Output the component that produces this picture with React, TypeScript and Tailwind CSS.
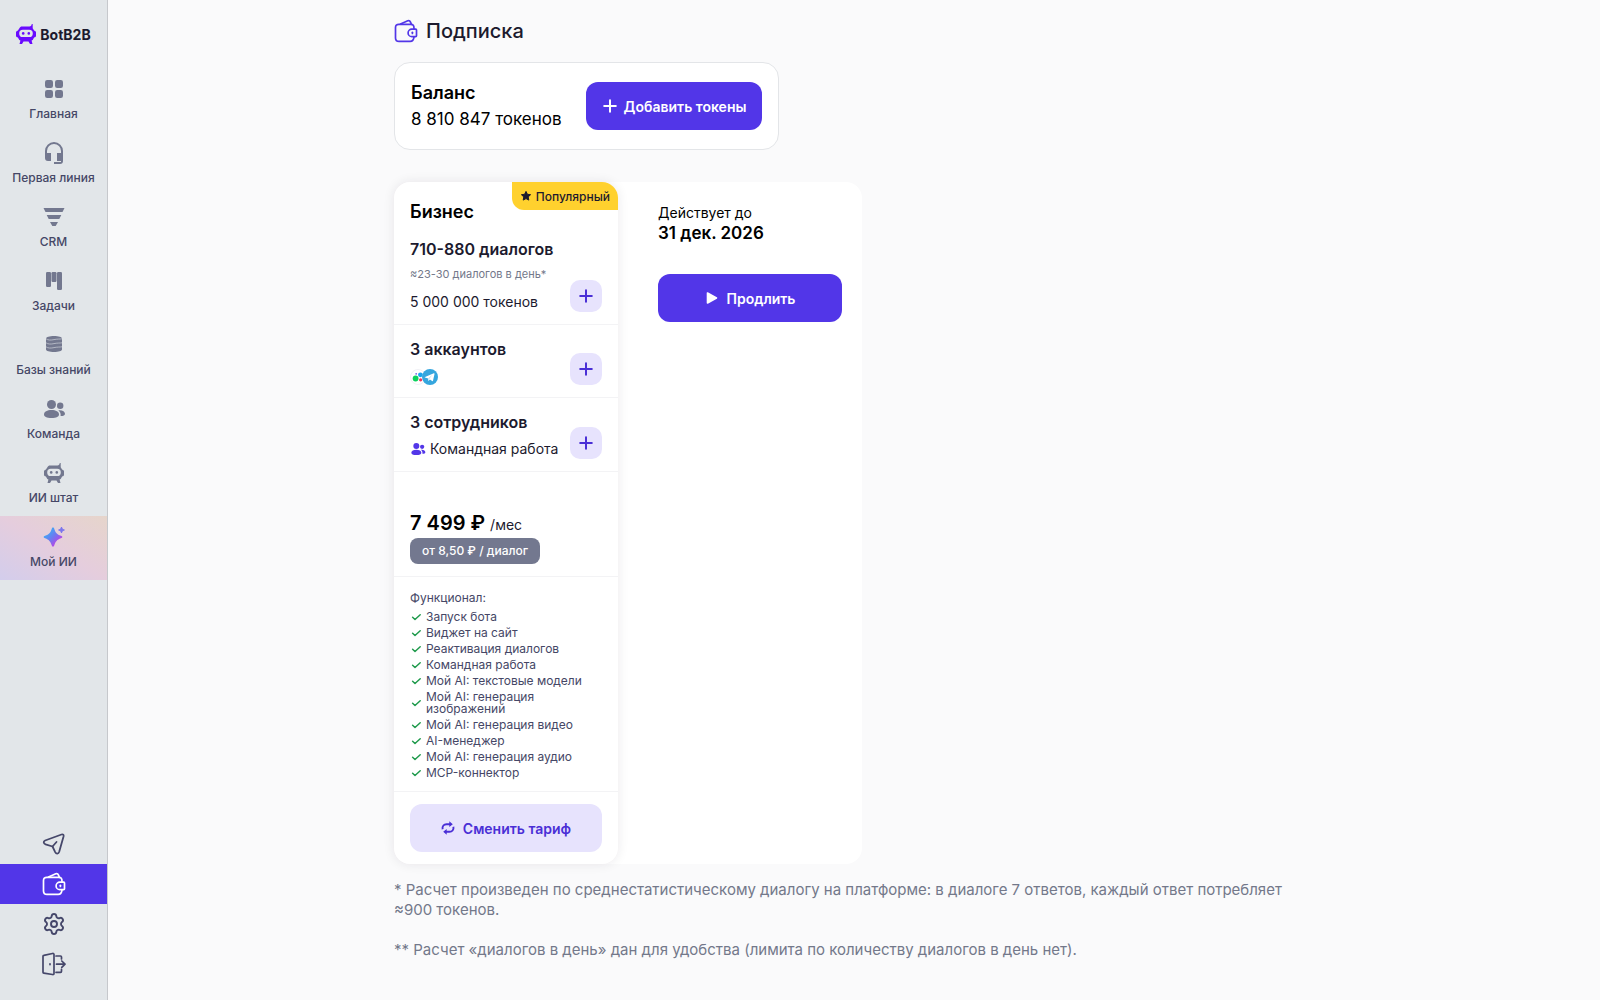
import type { ReactNode } from 'react';
import { Plus, Settings } from 'lucide-react';

interface IconProps {
  className?: string;
}

function RobotIcon({ className }: IconProps) {
  return (
    <svg viewBox="0 0 20 20" className={className} fill="currentColor">
      <path
        fillRule="evenodd"
        d="M13.5 2.6c1.400-.2 2-1 2.300-2.600h.9v4.200l1.400 2.300 1.400.7.5 1v3.800l-.5 1-1.400.6-1.400 2.300-1.100.6.9 3.400H14l-1.500-2.300h-5L6 19.900H3.500l.9-3.400-1.100-.6-1.400-2.300-1.400-.6-.5-1V8.200l.5-1 1.400-.7 2-3.100 1.200-.8ZM6.800 5.800a3.600 3.600 0 0 0 0 7.200h6.400a3.600 3.600 0 0 0 0-7.200Z"
      />
      <circle cx="7.2" cy="9.4" r="1.3" />
      <circle cx="12.8" cy="9.4" r="1.3" />
    </svg>
  );
}

function GridIcon() {
  return (
    <svg viewBox="0 0 24 24" className="size-6" fill="currentColor">
      <rect x="3" y="3" width="8" height="8" rx="2.2" />
      <rect x="13" y="3" width="8" height="8" rx="2.2" />
      <rect x="3" y="13" width="8" height="8" rx="2.2" />
      <rect x="13" y="13" width="8" height="8" rx="2.2" />
    </svg>
  );
}

function HeadsetIcon() {
  return (
    <svg viewBox="0 0 24 24" className="size-6" fill="currentColor">
      <path d="M12 1a9 9 0 0 0-9 9v7a3 3 0 0 0 3 3h3v-8H5v-2a7 7 0 0 1 14 0v2h-4v8h4v1h-7v2h6a3 3 0 0 0 3-3V10a9 9 0 0 0-9-9Z" />
    </svg>
  );
}

function FunnelIcon() {
  return (
    <svg viewBox="0 0 24 24" className="size-6" fill="currentColor">
      <path d="M1.500 3h21l-2 4h-17ZM4.700 10h14.600l-2 4H6.700ZM8 17h8l-2.300 4h-3.400Z" />
    </svg>
  );
}

function BoardIcon() {
  return (
    <svg viewBox="0 0 24 24" className="size-6" fill="currentColor">
      <rect x="4" y="3" width="5" height="15" rx="1.2" />
      <rect x="9.5" y="3" width="5" height="10" rx="1.2" />
      <rect x="15" y="3" width="5" height="18" rx="1.2" />
    </svg>
  );
}

function DatabaseIcon() {
  return (
    <svg viewBox="0 0 24 24" className="size-6">
      <path
        d="M4 5.500C4 4 7.500 3 12 3s8 1 8 2.500v11c0 1.500-3.500 2.500-8 2.500s-8-1-8-2.500Z"
        fill="currentColor"
      />
      <g fill="none" stroke="#c3c7d0" strokeWidth="0.8">
        <path d="M4 5.800c2 1.500 5 1.500 8 .8s6-.4 8-.8" />
        <path d="M4 9.800c2 1.500 5 1.500 8 .8s6-.4 8-.8" />
        <path d="M4 13.800c2 1.500 5 1.500 8 .8s6-.4 8-.8" />
      </g>
    </svg>
  );
}

function TeamIcon({ className }: IconProps) {
  return (
    <svg viewBox="0 0 24 24" className={className} fill="currentColor">
      <circle cx="9.5" cy="7.500" r="4.500" />
      <path d="M2 17.500c0-3 3.200-4.500 7.500-4.500s7.500 1.500 7.500 4.500c0 2.300-2.500 3.500-7.500 3.500S2 19.800 2 17.500Z" />
      <circle cx="18.200" cy="8.800" r="3.200" />
      <path d="M16.300 13.300c3.800-.6 6.700 1.200 6.700 3.400 0 1.500-1.500 2.300-4.400 2.400.4-2.200-.5-4.400-2.300-5.800Z" />
    </svg>
  );
}

function SparkleIcon() {
  return (
    <svg viewBox="0 0 24 24" className="size-6">
      <defs>
        <linearGradient id="sparkle" x1="0" y1="0" x2="1" y2="1">
          <stop offset="0.2" stopColor="#3fa9f5" />
          <stop offset="0.5" stopColor="#6f78f0" />
          <stop offset="0.75" stopColor="#b04ae8" />
        </linearGradient>
      </defs>
      <path
        d="M11 2.500c.7 0 1 .5 1.300 1.400 1.200 3.900 2.700 5.400 6.600 6.800.8.300 1.400.6 1.400 1.300s-.6 1-1.400 1.300c-3.900 1.500-5.400 3.200-6.600 7-.3.900-.6 1.400-1.300 1.400s-1-.5-1.300-1.400c-1.200-3.800-2.700-5.500-6.600-7-.8-.3-1.400-.6-1.400-1.300s.6-1 1.400-1.300c3.900-1.400 5.400-2.900 6.600-6.800.3-.9.6-1.400 1.300-1.400Z"
        fill="url(#sparkle)"
      />
      <path
        d="M19.500 2c.5 2 .9 2.400 2.900 3-2 .6-2.400 1-2.900 3-.5-2-.9-2.400-2.900-3 2-.6 2.400-1 2.900-3Z"
        fill="#7a74ee"
        stroke="#7a74ee"
        strokeLinejoin="round"
      />
    </svg>
  );
}

function SendIcon() {
  return (
    <svg
      viewBox="0 0 24 24"
      className="size-6"
      fill="none"
      stroke="currentColor"
      strokeWidth="1.8"
      strokeLinecap="round"
      strokeLinejoin="round"
    >
      <path d="M3.100 8.500 19.500 2.500c1.600-.5 2.400.3 2.100 1.800l-4.400 15.400c-.8 2.300-2.900 2.500-4 .4l-2.700-5.600-6.900-2.200c-2.300-.9-2.500-2.900-.5-3.800Z" />
      <path d="m10.500 14.500 4-4.500" />
    </svg>
  );
}

function WalletIcon({ className }: IconProps) {
  return (
    <svg
      viewBox="0 0 24 24"
      className={className}
      fill="none"
      stroke="currentColor"
      strokeWidth="1.7"
      strokeLinecap="round"
      strokeLinejoin="round"
    >
      <path d="M20 9.500c0-2.800-.8-4.200-3.300-4.200H4.800c-2.200 0-3.300 1.200-3.300 3.200V19c0 2.300 1.200 3.400 3.500 3.400h11.200c2.300 0 3.500-1.500 3.800-4.600" />
      <path d="m6.500 5 7.300-3.300c1.200-.4 2.200.2 2.700 1.400l.8 2" />
      <path d="M21.700 10.200h-3.900a3.700 3.700 0 0 0 0 7.400h3.900c.5 0 .8-.3.800-.8V11c0-.5-.3-.8-.8-.8Z" />
      <path d="M18.400 13.300v1.200" />
    </svg>
  );
}

function ExitIcon() {
  return (
    <svg
      viewBox="0 0 24 24"
      className="size-6"
      fill="none"
      stroke="currentColor"
      strokeWidth="1.7"
      strokeLinecap="round"
      strokeLinejoin="round"
    >
      <path d="M1.800 3.300 10.500 1.500c.9-.2 1.500.2 1.500 1.100v18.800c0 .9-.6 1.300-1.500 1.100l-8.700-1.300c-.6-.1-.8-.4-.8-1V4.300c0-.6.200-.9.800-1Z" />
      <path d="M8 11.800v.8M14 4h4.500c.7 0 1 .4 1 1v2M14 20.300h4.500c.7 0 1-.4 1-1v-2M14.500 12.200h8.300M19.800 9l3.200 3.200-3.200 3.200" />
    </svg>
  );
}

function CheckIcon() {
  return (
    <svg viewBox="0 0 12 12" className="size-3 shrink-0" fill="none" stroke="#1f9a4c" strokeWidth="1.5">
      <path d="m2.600 6.300 2.400 2.200 5.200-4.700" strokeLinecap="round" strokeLinejoin="round" />
    </svg>
  );
}

function SwapIcon() {
  return (
    <svg viewBox="0 0 14 14" className="size-3.5" fill="none" stroke="currentColor" strokeWidth="1.9">
      <path d="M1.600 8.200C1 5 3 3.200 5.500 3.200h4" />
      <path d="M12.400 5.800c.6 3.200-1.400 5-3.900 5h-4" />
      <path d="M8.300.3 11.800 3.200 8.300 6.100ZM5.700 7.900 2.200 10.800l3.500 2.900Z" fill="currentColor" stroke="none" />
    </svg>
  );
}

function StarIcon() {
  return (
    <svg viewBox="0 0 12 12" className="size-3" fill="currentColor" stroke="currentColor" strokeLinejoin="round">
      <path d="m6 1.400 1.400 2.900 3.200.4-2.400 2.200.6 3.200L6 8.600l-2.800 1.500.6-3.200L1.400 4.700l3.200-.4Z" />
    </svg>
  );
}

function MessengerIcon() {
  return (
    <svg viewBox="0 0 16 16" className="size-4">
      <circle cx="8" cy="8" r="7.500" fill="#fff" stroke="#f1f1f6" />
      <circle cx="5.600" cy="9.500" r="2.900" fill="#0bd15c" />
      <circle cx="10.400" cy="5.800" r="2.400" fill="#19a5ee" />
      <circle cx="10.600" cy="10.800" r="1.600" fill="#f0365a" />
      <circle cx="6.200" cy="4.800" r="0.9" fill="#7857e8" />
    </svg>
  );
}

function TelegramIcon() {
  return (
    <svg viewBox="0 0 16 16" className="-ml-1 size-4">
      <circle cx="8" cy="8" r="8" fill="#35a6de" />
      <path
        d="m3 7.900 8.800-3.600c.5-.2.8.1.7.6l-1.500 6.900c-.1.500-.5.600-.9.300L7.900 10.500l-1.200 1.200c-.3.200-.5.100-.5-.2l-.1-2L3 8.500c-.4-.1-.4-.4 0-.6Z"
        fill="#fff"
      />
      <path d="m6.200 9.500 4.200-3.700-3.200 4.200-.5 1.700Z" fill="#b9dff2" />
    </svg>
  );
}

function PlayIcon() {
  return (
    <svg viewBox="0 0 14 14" className="size-3.5" fill="currentColor" stroke="currentColor" strokeWidth="1.6" strokeLinejoin="round">
      <path d="M2.500 2v10l9-5Z" />
    </svg>
  );
}

const navItems: { label: string; icon: ReactNode; active?: boolean }[] = [
  { label: 'Главная', icon: <GridIcon /> },
  { label: 'Первая линия', icon: <HeadsetIcon /> },
  { label: 'CRM', icon: <FunnelIcon /> },
  { label: 'Задачи', icon: <BoardIcon /> },
  { label: 'Базы знаний', icon: <DatabaseIcon /> },
  { label: 'Команда', icon: <TeamIcon className="size-6" /> },
  { label: 'ИИ штат', icon: <RobotIcon className="size-5" /> },
  { label: 'Мой ИИ', icon: <SparkleIcon />, active: true }
];

const bottomItems: { id: string; icon: ReactNode; active?: boolean }[] = [
  { id: 'send', icon: <SendIcon /> },
  { id: 'wallet', icon: <WalletIcon className="size-6" />, active: true },
  { id: 'settings', icon: <Settings size={24} strokeWidth={1.9} /> },
  { id: 'exit', icon: <ExitIcon /> }
];

const features = [
  'Запуск бота',
  'Виджет на сайт',
  'Реактивация диалогов',
  'Командная работа',
  'Мой AI: текстовые модели',
  'Мой AI: генерация изображений',
  'Мой AI: генерация видео',
  'AI-менеджер',
  'Мой AI: генерация аудио',
  'MCP-коннектор'
];

function Sidebar() {
  return (
    <aside className="sticky top-0 flex h-screen w-27 shrink-0 flex-col border-r border-[#c6c8cc] bg-[#e2e6e9] pb-4">
      <a href="#" className="flex h-17 shrink-0 items-center justify-center gap-1 text-[14px] font-bold text-[#1c1a2e]">
        <RobotIcon className="size-5 text-[#6a0bff]" />
        BotB2B
      </a>
      <nav className="flex flex-col">
        {navItems.map((item) => (
          <a
            key={item.label}
            href="#"
            className={`flex h-16 flex-col items-center justify-center gap-1 text-[12px] leading-[18px] font-medium whitespace-nowrap text-[#454766] ${
              item.active ? 'bg-linear-to-tr from-[#d3cdec] via-[#e5cddd] to-[#e6d5cb]' : ''
            }`}
          >
            <span className="flex size-6 items-center justify-center text-[#73788f]">{item.icon}</span>
            {item.label}
          </a>
        ))}
      </nav>
      <nav className="mt-auto flex flex-col">
        {bottomItems.map((item) => (
          <a
            key={item.id}
            href="#"
            className={`flex h-10 items-center justify-center ${
              item.active ? 'bg-[#5236e8] text-white' : 'text-[#45476a]'
            }`}
          >
            {item.icon}
          </a>
        ))}
      </nav>
    </aside>
  );
}

function PlusButton() {
  return (
    <button className="flex size-8 shrink-0 items-center justify-center rounded-[10px] bg-[#e7e3fd] text-[#4a2fd6]">
      <Plus size={20} strokeWidth={2.4} />
    </button>
  );
}

function PlanCard() {
  return (
    <section className="relative w-56 shrink-0 rounded-2xl bg-white text-[14px] leading-[21px] text-[#1c1a2e] shadow-[0_0_12px_rgba(28,26,46,0.09)]">
      <div className="absolute top-0 right-0 flex h-7 items-center gap-1 rounded-tr-2xl rounded-bl-xl bg-[#ffd12e] px-2 text-[12px] font-medium">
        <StarIcon />
        Популярный
      </div>
      <div className="border-b border-[#f3f3f5] px-4 pt-4 pb-3">
        <h2 className="text-[18px] leading-[27px] font-semibold text-black">Бизнес</h2>
        <div className="mt-3 flex items-end justify-between">
          <div>
            <h3 className="text-[16px] leading-6 font-semibold whitespace-nowrap">710-880 диалогов</h3>
            <p className="mt-1 text-[11px] leading-[18px] whitespace-nowrap text-[#73788a]">≈23-30 диалогов в день*</p>
            <p className="mt-2">5 000 000 токенов</p>
          </div>
          <PlusButton />
        </div>
      </div>
      <div className="flex items-end justify-between border-b border-[#f3f3f5] px-4 py-3">
        <div>
          <h3 className="text-[16px] leading-6 font-semibold">3 аккаунтов</h3>
          <div className="mt-2 flex">
            <MessengerIcon />
            <TelegramIcon />
          </div>
        </div>
        <PlusButton />
      </div>
      <div className="flex items-end justify-between border-b border-[#f3f3f5] px-4 py-3">
        <div>
          <h3 className="text-[16px] leading-6 font-semibold">3 сотрудников</h3>
          <p className="mt-1 flex items-center gap-1 whitespace-nowrap">
            <TeamIcon className="size-4 text-[#5236e8]" />
            Командная работа
          </p>
        </div>
        <PlusButton />
      </div>
      <div className="border-b border-[#f3f3f5] px-4 pt-9 pb-3">
        <p className="text-[20px] leading-[30px] font-semibold text-black">
          7 499 ₽ <span className="text-[14px] leading-none font-normal text-[#1c1a2e]">/мес</span>
        </p>
        <div className="w-fit rounded-lg bg-[#73788f] px-3 py-1 text-[12px] leading-[18px] font-medium text-white">
          от 8,50 ₽ / диалог
        </div>
      </div>
      <div className="border-b border-[#f3f3f5] px-4 py-3 text-[12px] text-[#454766]">
        <p className="leading-[18px]">Функционал:</p>
        <ul className="mt-1 flex flex-col gap-1 leading-3">
          {features.map((feature) => (
            <li key={feature} className="flex items-center gap-1">
              <CheckIcon />
              {feature}
            </li>
          ))}
        </ul>
      </div>
      <div className="px-4 py-3">
        <button className="flex h-12 w-full items-center justify-center gap-2 rounded-xl bg-[#e7e3fd] font-semibold text-[#4a2fd6]">
          <SwapIcon />
          Сменить тариф
        </button>
      </div>
    </section>
  );
}

export default function App() {
  return (
    <div className="flex min-h-screen bg-[#fafafb] font-['Inter','Noto_Sans',sans-serif] text-black">
      <Sidebar />
      <main className="min-w-0 flex-1">
        <div className="mx-auto max-w-[920px] py-4">
          <h1 className="mb-4 flex items-center gap-2 text-[20px] leading-[30px] font-medium text-[#1c1a2e]">
            <WalletIcon className="size-6 text-[#5236e8]" />
            Подписка
          </h1>

          <section className="flex w-fit items-center gap-6 rounded-2xl border border-[#e3e5e8] bg-white p-4 leading-[27px]">
            <div>
              <h2 className="text-[18px] font-semibold">Баланс</h2>
              <p className="text-[17px]">8 810 847 токенов</p>
            </div>
            <button className="flex h-12 items-center gap-1 rounded-xl bg-[#5236e8] pr-4 pl-3.5 text-[14px] font-semibold text-white">
              <Plus size={20} strokeWidth={2.4} />
              Добавить токены
            </button>
          </section>

          <div className="mt-8 flex w-fit rounded-2xl bg-white">
            <PlanCard />
            <section className="py-5 pr-5 pl-10">
              <p className="text-[14px] leading-[21px]">Действует до</p>
              <p className="text-[17px] leading-[21px] font-semibold">31 дек. 2026</p>
              <button className="mt-[30px] flex h-12 w-46 items-center justify-center gap-2 rounded-xl bg-[#5236e8] text-[14px] font-semibold text-white">
                <PlayIcon />
                Продлить
              </button>
            </section>
          </div>

          <div className="mt-4 flex flex-col gap-5 text-[15px] leading-5 text-[#73788a]">
            <p>
              * Расчет произведен по среднестатистическому диалогу на платформе: в диалоге 7 ответов, каждый ответ
              потребляет ≈900 токенов.
            </p>
            <p>** Расчет «диалогов в день» дан для удобства (лимита по количеству диалогов в день нет).</p>
          </div>
        </div>
      </main>
    </div>
  );
}
